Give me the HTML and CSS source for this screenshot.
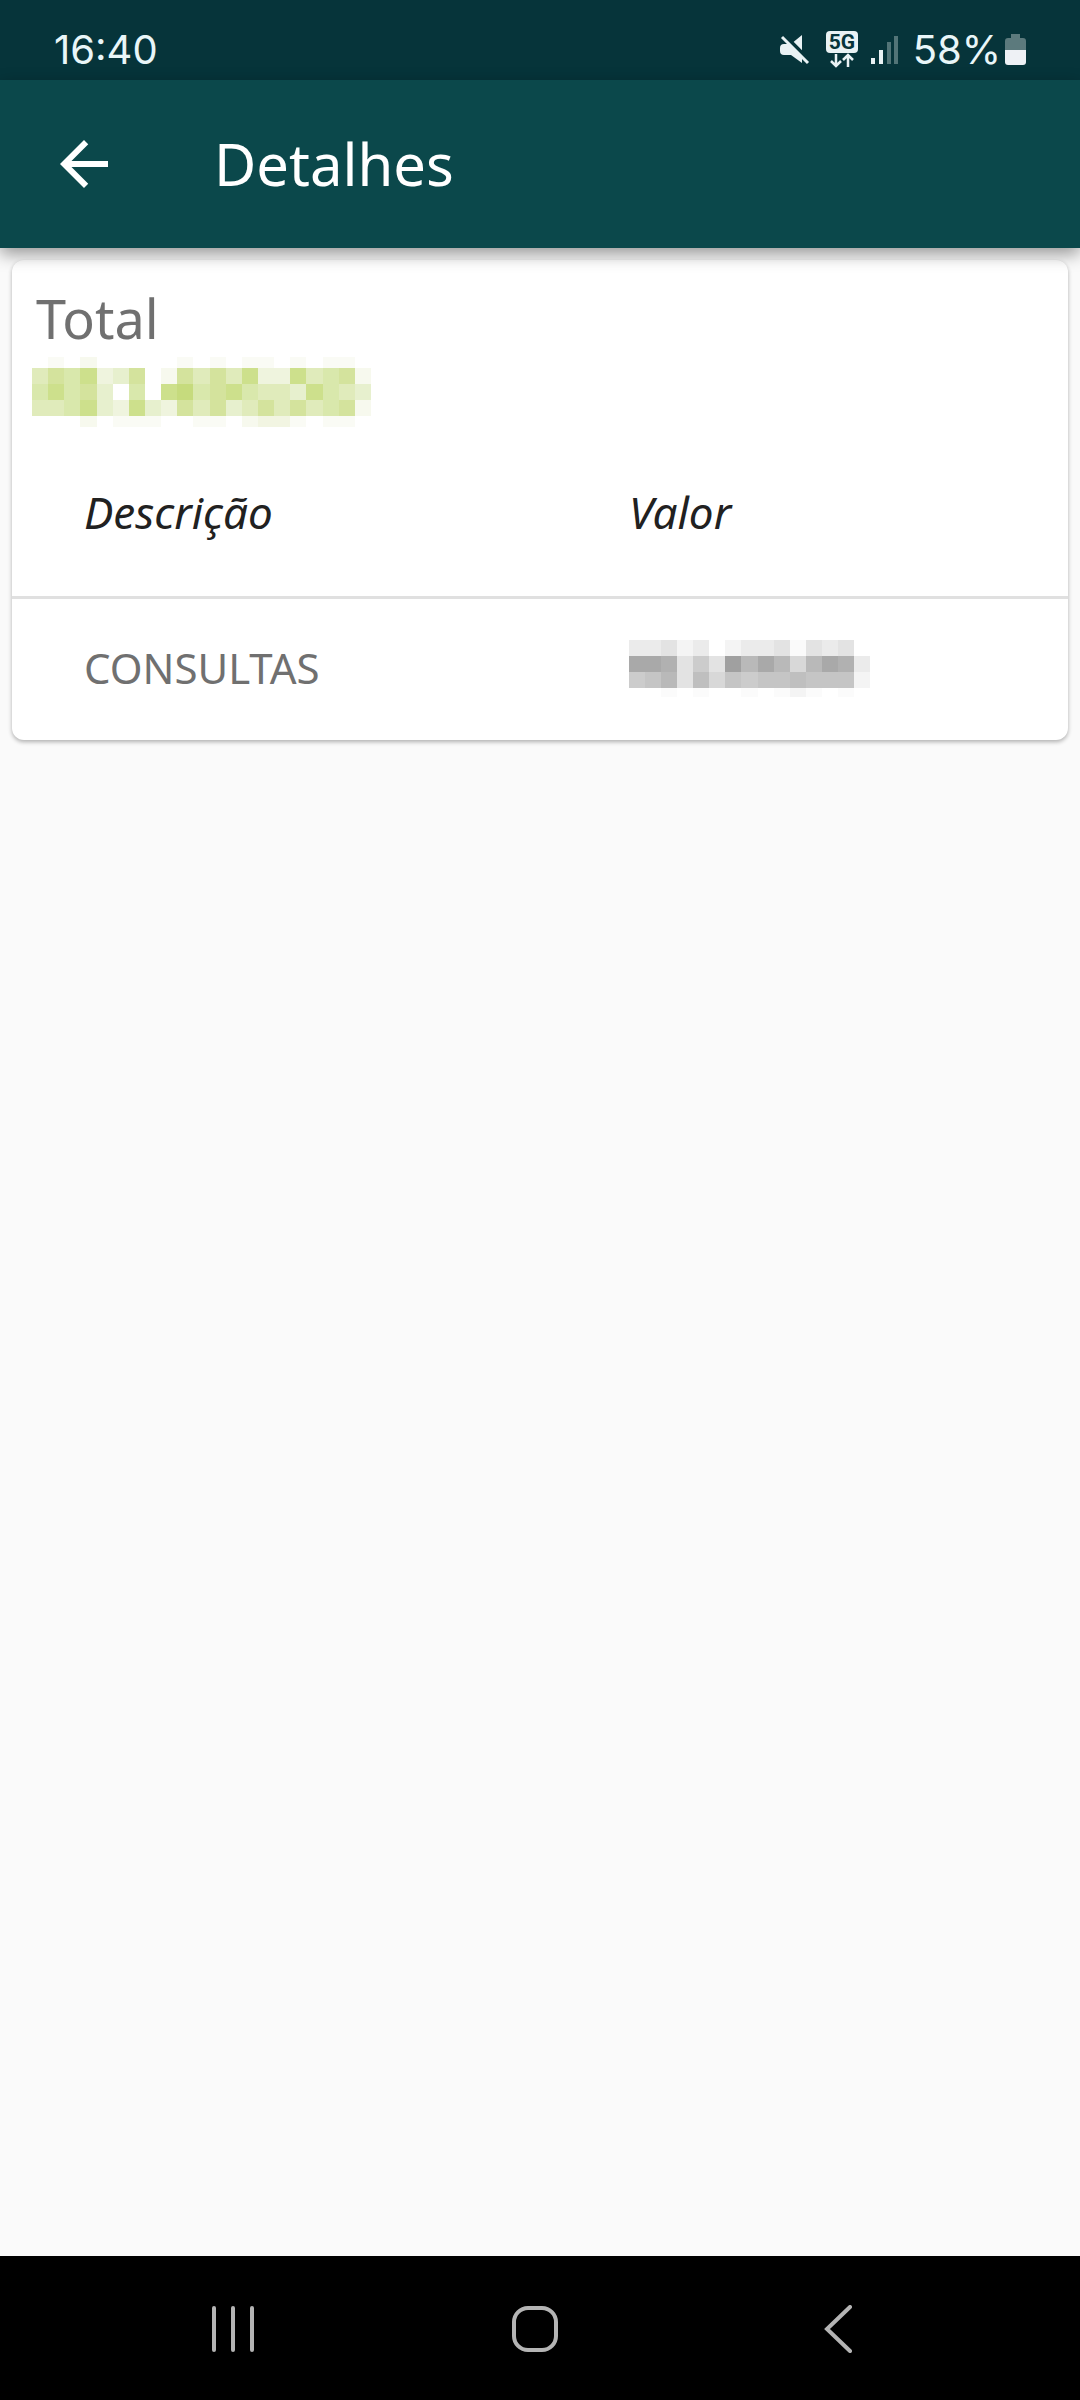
FILE: index.html
```html
<!DOCTYPE html>
<html lang="pt-BR">
<head>
<meta charset="utf-8">
<meta name="viewport" content="width=device-width, initial-scale=1">
<title>Detalhes</title>
<link rel="stylesheet" href="styles.css">
</head>
<body>
<div class="status-bar">
  <span class="clock">16:40</span>
  <div class="status-icons">
    <svg class="mute-icon" width="30" height="30" viewBox="0 0 30 30" aria-hidden="true">
      <path fill="#e9f2f4" d="M22 0v28L11 20H4q-4 0-4-4v-3q0-4 4-4h7z"/>
      <path stroke="#06343a" stroke-width="4" d="M2 -2l30 30"/>
      <path stroke="#e9f2f4" stroke-width="3" d="M2 2l26 26"/>
    </svg>
    <svg class="network-icon" width="32" height="38" viewBox="0 0 32 38" aria-hidden="true">
      <rect width="32" height="22" rx="4" fill="#e9f2f4"/>
      <text class="network-text" x="16" y="18" text-anchor="middle">5G</text>
      <path fill="none" stroke="#e9f2f4" stroke-width="2.500" d="M10 23v12M5 30l5 5 5-5M22 36V24M17 29l5-5 5 5"/>
    </svg>
    <svg class="signal-icon" width="28" height="30" viewBox="0 0 28 30" aria-hidden="true">
      <path stroke="#e9f2f4" stroke-width="4" d="M2 23v6M10 15v14"/>
      <path stroke="#527477" stroke-width="4" d="M18 7v22M25 1v28"/>
    </svg>
    <span class="charge">58%</span>
    <svg class="battery-icon" width="21" height="32" viewBox="0 0 21 32" aria-hidden="true">
      <path fill="#5c7a7d" d="M6 0h9v4h3q3 0 3 3v9H0V7q0-3 3-3h3z"/>
      <path fill="#eef1f5" d="M0 16h21v12q0 3-3 3H3q-3 0-3-3z"/>
    </svg>
  </div>
</div>

<header class="app-bar">
  <button class="back-button" type="button" aria-label="Voltar">
    <svg width="72" height="72" viewBox="0 0 24 24"><path fill="#fff" d="M20 11H7.830l5.590-5.590L12 4l-8 8 8 8 1.410-1.410L7.830 13H20z"/></svg>
  </button>
  <h1 class="title">Detalhes</h1>
</header>

<main class="content">
  <section class="card">
    <h2 class="total-label">Total</h2>
    <svg class="total-hidden" viewBox="0 0 21 4.750" preserveAspectRatio="none" shape-rendering="crispEdges" role="img" aria-label="Valor oculto">
      <g stroke-width=".7">
        <path stroke="#fafbf5" d="M1 .65h1M9 .65h1M11 .65h1M13 .65h2M16 .65h1M18 .65h2M5 4.330h3M10 4.330h2M16 4.330h1M18 4.330h2"/>
        <path stroke="#f7f9ee" d="M3 .65h1M3 4.330h1M13 4.330h1"/>
        <path stroke="#f2f5e2" d="M14 4.330h2"/>
      </g>
      <g stroke-width="1">
        <path stroke="#c6db7d" d="M9 2.500h1"/>
        <path stroke="#cde08c" d="M3 1.500h1M13 1.500h1M16 1.500h1M1 2.500h1M8 2.500h1M12 2.500h1M17 2.500h1M3 3.500h1M6 3.500h1"/>
        <path stroke="#d4e39d" d="M1 1.500h1M6 1.500h1M9 1.500h1M11 1.500h1M19 1.500h1M3 2.500h1M11 2.500h1M9 3.500h1M11 3.500h1M14 3.500h1M16 3.500h1M19 3.500h1"/>
        <path stroke="#d9e8ac" d="M2 1.500h1M18 1.500h1M0 2.500h1M2 2.500h1M6 2.500h1M10 2.500h1M13 2.500h1M18 2.500h1M2 3.500h1M18 3.500h1"/>
        <path stroke="#e0ebbb" d="M0 1.500h1M10 1.500h1M12 1.500h1M17 1.500h1M14 2.500h2M19 2.500h1M0 3.500h2M10 3.500h1M13 3.500h1M15 3.500h1M17 3.500h1"/>
        <path stroke="#e7f0ce" d="M5 1.500h1M4 2.500h1M16 2.500h1M20 2.500h1M4 3.500h1M7 3.500h1M12 3.500h1"/>
        <path stroke="#eff4de" d="M4 1.500h1M14 1.500h2M5 3.500h1M8 3.500h1"/>
        <path stroke="#f7f9ee" d="M8 1.500h1M20 1.500h1M20 3.500h1"/>
      </g>
    </svg>
    <table class="details">
      <thead>
        <tr><th scope="col">Descrição</th><th scope="col">Valor</th></tr>
      </thead>
      <tbody>
        <tr>
          <td>CONSULTAS</td>
          <td>
            <svg class="value-hidden" viewBox="0 0 15 4" preserveAspectRatio="none" shape-rendering="crispEdges" role="img" aria-label="Valor oculto">
              <g stroke-width="1">
                <path stroke="#ebebeb" d="M0 .5h2M4 .5h1M7 .5h2M12 .5h1M14 1.500h1"/>
                <path stroke="#e3e3e3" d="M2 .5h1M9 .5h1M11 .5h1M13 .5h1M3 1.500h1M5 1.500h1M3 2.500h1"/>
                <path stroke="#f4f4f4" d="M3 .5h1M6 .5h1M14 2.500h1"/>
                <path stroke="#fafafa" d="M10 .5h1"/>
                <path stroke="#a0a0a0" d="M6 1.500h1"/>
                <path stroke="#a9a9a9" d="M0 1.500h2M8 1.500h1M12 1.500h1"/>
                <path stroke="#b1b1b1" d="M2 1.500h1M13 1.500h1"/>
                <path stroke="#b9b9b9" d="M7 1.500h1M9 1.500h1M11 1.500h1M2 2.500h1"/>
                <path stroke="#bfbfbf" d="M4 2.500h1M10 2.500h1"/>
                <path stroke="#c5c5c5" d="M1 2.500h1M6 2.500h1M8 2.500h2M11 2.500h3"/>
                <path stroke="#cccccc" d="M4 1.500h1M0 2.500h1M7 2.500h1"/>
                <path stroke="#d8d8d8" d="M10 1.500h1M5 2.500h1"/>
              </g>
              <g stroke-width=".56">
                <path stroke="#fbfbfb" d="M2 3.280h1M4 3.280h1M7 3.280h1M9 3.280h1M11 3.280h1M13 3.280h1"/>
                <path stroke="#f4f4f4" d="M10 3.280h1"/>
              </g>
            </svg>
          </td>
        </tr>
      </tbody>
    </table>
  </section>
</main>

<nav class="system-nav" aria-label="Sistema">
  <button type="button" aria-label="Recentes">
    <svg width="48" height="48" viewBox="0 0 48 48"><path stroke="#b4b4b4" stroke-width="4" stroke-linecap="round" d="M5 3v42M24 3v42M43 3v42"/></svg>
  </button>
  <button type="button" aria-label="Início">
    <svg width="48" height="48" viewBox="0 0 48 48"><rect x="3" y="3" width="42" height="42" rx="14" fill="none" stroke="#b4b4b4" stroke-width="4"/></svg>
  </button>
  <button type="button" aria-label="Voltar ao anterior">
    <svg width="48" height="48" viewBox="0 0 48 48"><path fill="none" stroke="#b4b4b4" stroke-width="4" stroke-linecap="round" d="M37 2L14 24l23 22"/></svg>
  </button>
</nav>
</body>
</html>
```
FILE: styles.css
```css
* {
  box-sizing: border-box;
}

body {
  margin: 0;
  min-height: 100vh;
  display: flex;
  flex-direction: column;
  background: #fafafa;
  font-family: "Noto Sans", "Open Sans", sans-serif;
}

svg {
  display: block;
}

button {
  display: flex;
  align-items: center;
  justify-content: center;
  padding: 0;
  border: 0;
  background: none;
}

.status-bar {
  display: flex;
  align-items: center;
  justify-content: space-between;
  height: 80px;
  padding: 20px 54px 0;
  background: #06343a;
  color: #e9f6f8;
  font: 40px/60px Inter, Roboto, sans-serif;
}

.status-icons {
  display: flex;
  align-items: center;
}

.network-icon {
  margin-left: 16px;
}

.network-text {
  font: bold 21px Roboto, sans-serif;
  fill: #06343a;
}

.signal-icon {
  margin-left: 13px;
}

.charge {
  margin-left: 14px;
}

.battery-icon {
  margin-left: 4px;
}

.app-bar {
  position: relative;
  z-index: 1;
  display: flex;
  align-items: center;
  height: 168px;
  padding: 0 48px;
  background: #0b484b;
  box-shadow: 0 6px 16px rgba(0, 0, 0, 0.4);
}

.title {
  margin: 0 0 0 94px;
  color: #fff;
  font-size: 58px;
  font-weight: 400;
  line-height: 76px;
}

.content {
  flex: 1;
  padding: 12px;
}

.card {
  overflow: hidden;
  padding: 24px 0 4px;
  border-radius: 12px;
  background: #fff;
  box-shadow: 0 2px 4px rgba(0, 0, 0, 0.3);
}

.total-label {
  margin: 0 24px;
  color: #707070;
  font-size: 54px;
  font-weight: 400;
  line-height: 68px;
}

.total-hidden {
  width: 339px;
  height: 76px;
  margin-left: 20px;
}

.details {
  width: 100%;
  table-layout: fixed;
  border-collapse: separate;
  border-spacing: 0;
  font-size: 42px;
  line-height: 56px;
}

.details th,
.details td {
  padding: 0 0 0 72px;
  text-align: left;
  font-weight: 400;
}

.details th:first-child {
  width: 52%;
}

.details th:last-child,
.details td:last-child {
  padding-left: 68px;
}

.details th {
  height: 171px;
  border-bottom: 3px solid #e0e0e0;
  color: #212121;
  font-size: 44px;
  font-style: italic;
}

.details td {
  height: 137px;
  color: #707070;
}

.value-hidden {
  width: 241px;
  height: 64px;
  margin-top: 8px;
}

.system-nav {
  display: grid;
  grid-template-columns: repeat(3, 1fr);
  height: 144px;
  padding: 2px 92px 0 82px;
  background: #000;
}
```
